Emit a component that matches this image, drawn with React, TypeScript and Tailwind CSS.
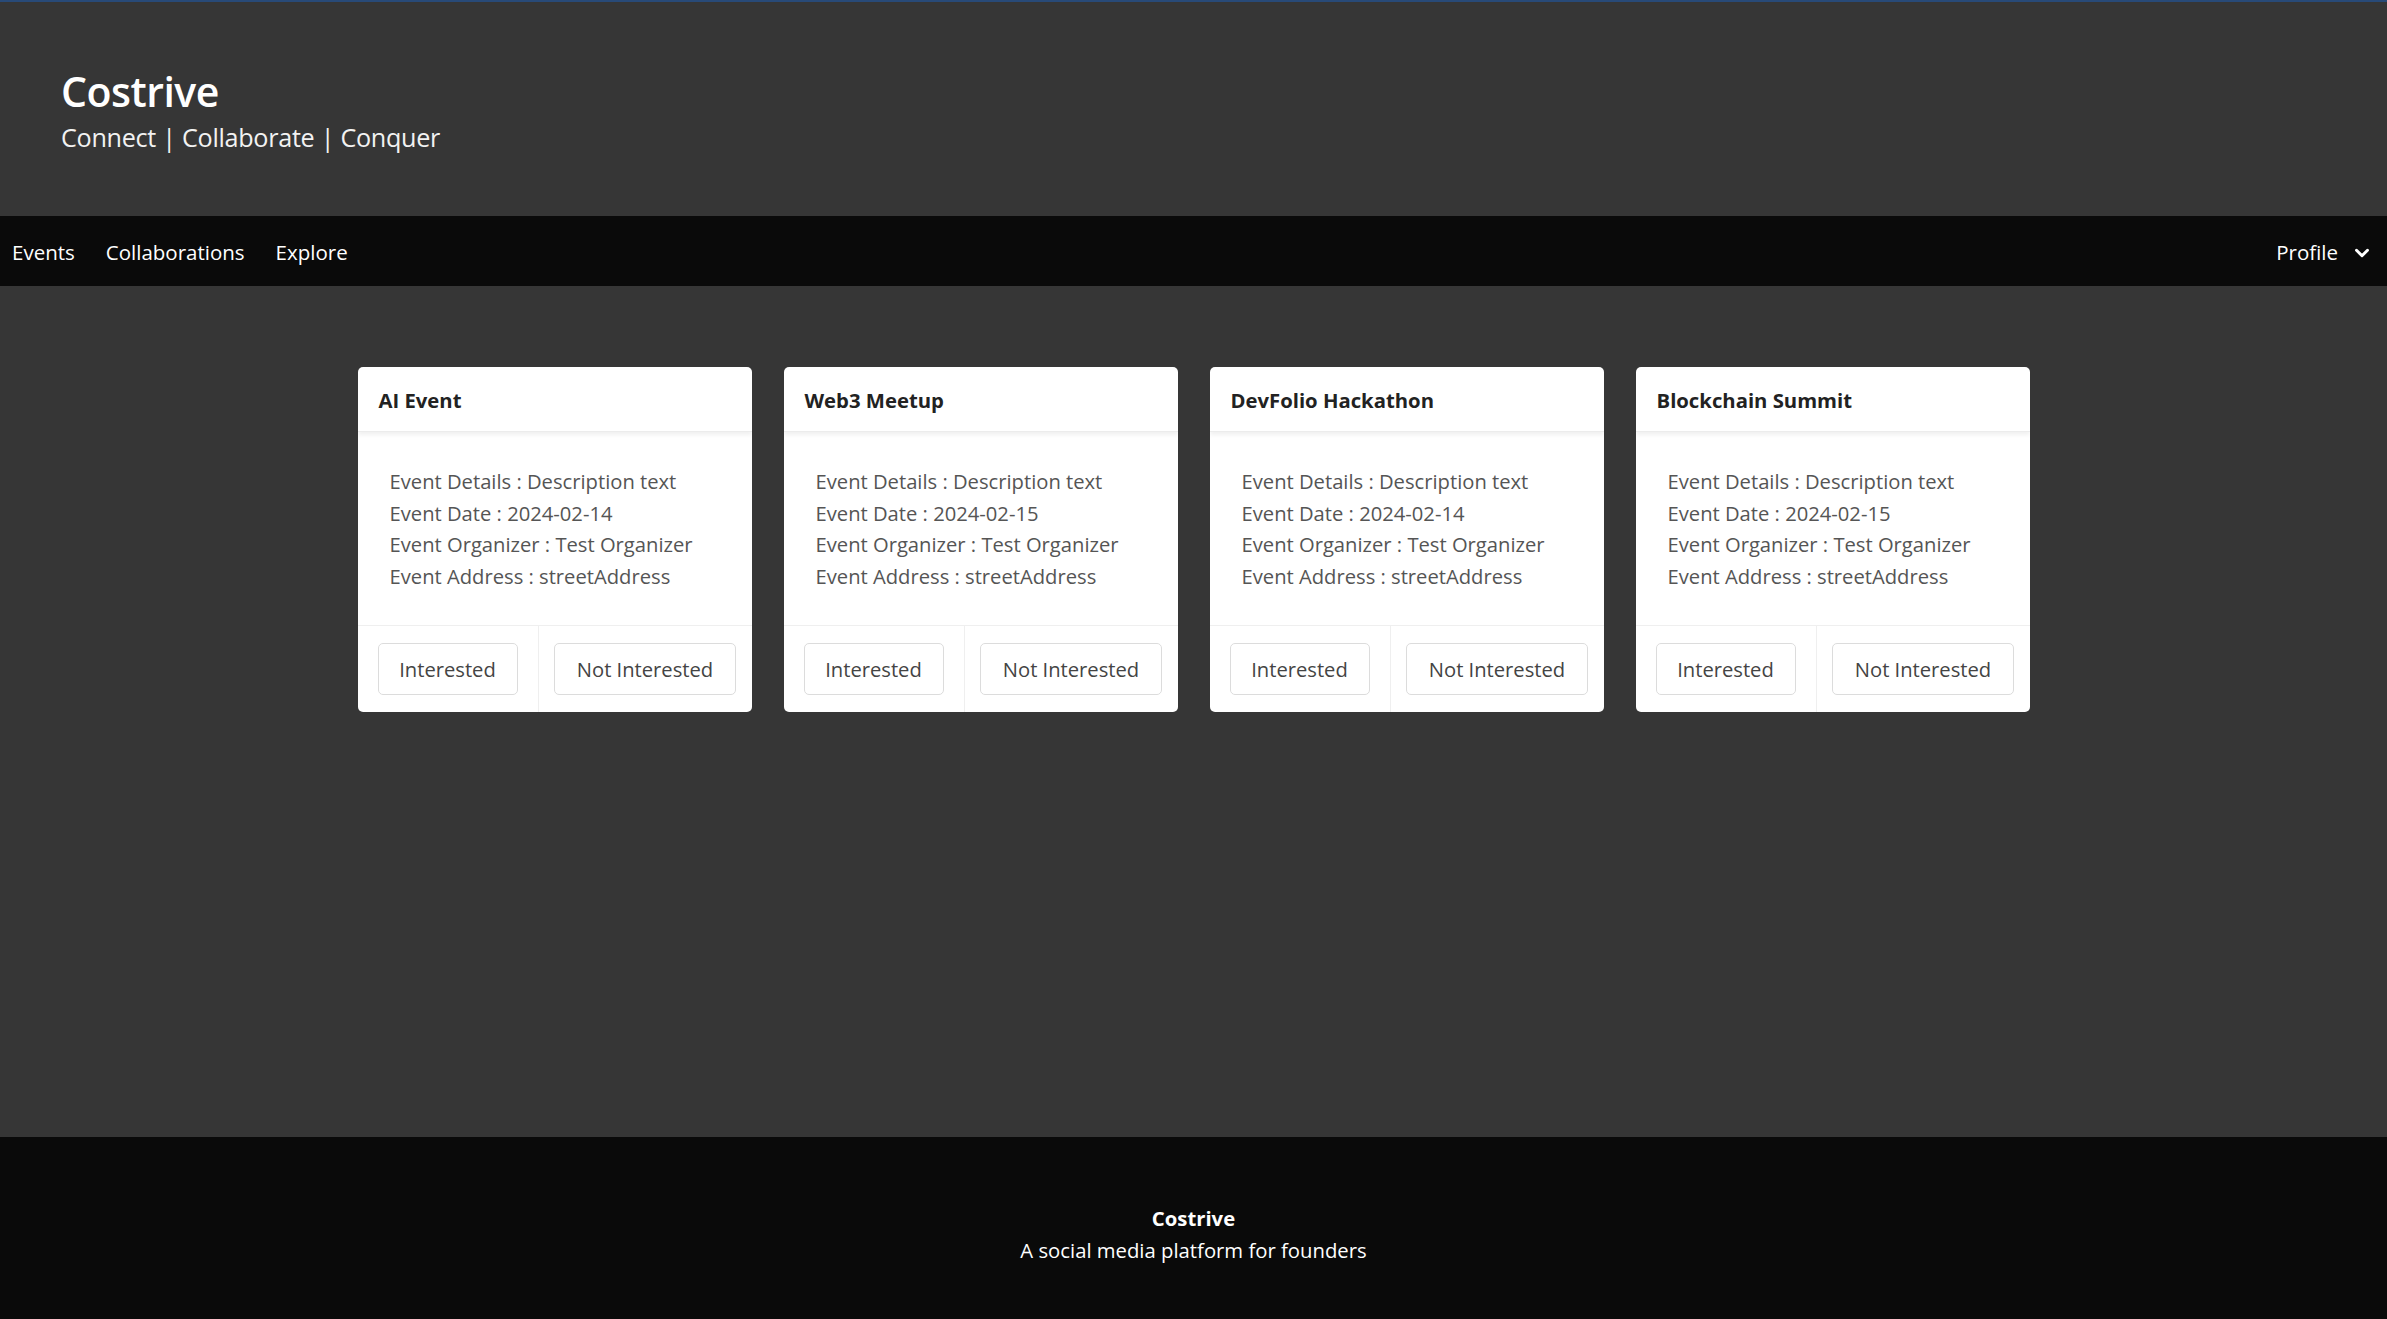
import { ChevronDown } from "lucide-react";

type EventItem = {
    title: string;
    details: string;
    date: string;
    organizer: string;
    address: string;
};

const events: EventItem[] = [
    { title: "AI Event", details: "Description text", date: "2024-02-14", organizer: "Test Organizer", address: "streetAddress" },
    { title: "Web3 Meetup", details: "Description text", date: "2024-02-15", organizer: "Test Organizer", address: "streetAddress" },
    { title: "DevFolio Hackathon", details: "Description text", date: "2024-02-14", organizer: "Test Organizer", address: "streetAddress" },
    { title: "Blockchain Summit", details: "Description text", date: "2024-02-15", organizer: "Test Organizer", address: "streetAddress" },
];

function EventCard({ event }: { event: EventItem }) {
    return (
        <div className="w-[394px] bg-white rounded-[5px] overflow-hidden flex flex-col">
            {/* Header */}
            <div className="h-[65px] flex items-center px-[21px] pt-[2px] border-b border-[#ececec] shadow-[0_3px_4px_rgba(0,0,0,0.06)] relative">
                <h3 className="text-[20.3px] font-bold text-[#222]">{event.title}</h3>
            </div>

            {/* Body */}
            <div className="px-[32px] pt-[34px] pb-[32px] text-[20.2px] leading-[31.7px] text-[#555]">
                <p>Event Details : {event.details}</p>
                <p>Event Date : {event.date}</p>
                <p>Event Organizer : {event.organizer}</p>
                <p>Event Address : {event.address}</p>
            </div>

            {/* Actions */}
            <div className="flex border-t border-[#efefef] h-[87px]">
                <div className="px-[20px] flex items-center border-r border-[#efefef]">
                    <button className="w-[140px] h-[52px] border border-[#dcdcdc] rounded-[5px] text-[20.2px] text-[#444] bg-white">
                        Interested
                    </button>
                </div>
                <div className="flex-1 flex items-center justify-center">
                    <button className="w-[182px] h-[52px] border border-[#dcdcdc] rounded-[5px] text-[20.2px] text-[#444] bg-white">
                        Not Interested
                    </button>
                </div>
            </div>
        </div>
    );
}

export default function App() {
    return (
        <div className="min-h-screen flex flex-col bg-[#363636] font-['Open_Sans','Noto_Sans',sans-serif]">
            {/* Top header */}
            <header className="h-[216px] border-t-2 border-[#284a78] pl-[61px] pt-[64px]">
                <h1 className="text-[41px] leading-[50px] font-semibold text-white tracking-[-0.5px]">Costrive</h1>
                <p className="mt-[4px] text-[25.2px] leading-[35px] text-[#f2f2f2] tracking-[-0.3px]">
                    Connect | Collaborate | Conquer
                </p>
            </header>

            {/* Nav */}
            <nav className="h-[70px] bg-[#0a0a0a] flex items-center justify-between pl-3 pr-[14px] pt-[3px]">
                <div className="flex items-center gap-[31px] text-[20.5px] text-white">
                    <a>Events</a>
                    <a>Collaborations</a>
                    <a>Explore</a>
                </div>
                <div className="flex items-center gap-[13px] text-[20.5px] text-white">
                    <span>Profile</span>
                    <ChevronDown className="w-[22px] h-[22px]" strokeWidth={3.2} />
                </div>
            </nav>

            {/* Events */}
            <main className="flex-1 pt-[81px]">
                <div className="flex justify-center gap-[32px]">
                    {events.map((ev) => (
                        <EventCard key={ev.title} event={ev} />
                    ))}
                </div>
            </main>

            {/* Footer */}
            <footer className="h-[182px] bg-[#0a0a0a] flex flex-col items-center pt-[65px] text-white">
                <p className="text-[20.3px] leading-[32px] font-bold">Costrive</p>
                <p className="text-[20.3px] leading-[32px]">A social media platform for founders</p>
            </footer>
        </div>
    );
}
